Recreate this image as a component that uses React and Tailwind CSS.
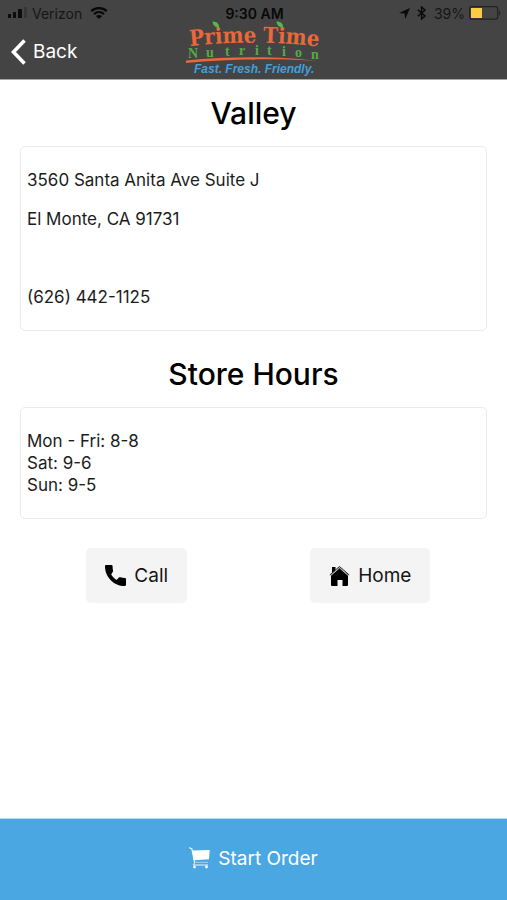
import React from "react";

function SignalIcon() {
  return (
    <svg className="h-3 w-6" viewBox="0 0 24 12" aria-hidden="true">
      <rect x="0" y="7" width="3" height="4" rx="0.5" fill="#0c0c0c" />
      <rect x="5" y="5" width="3" height="6" rx="0.5" fill="#0c0c0c" />
      <rect x="10" y="2" width="4" height="9" rx="0.5" fill="#0c0c0c" />
      <rect x="16" y="0" width="3" height="11" rx="0.5" fill="#363636" />
    </svg>
  );
}

function WifiIcon() {
  return (
    <svg className="h-3 w-[18px]" viewBox="0 0 18 12" aria-hidden="true">
      <path d="M1.2 4.2C5.6 0 12.4 0 16.8 4.2" fill="none" stroke="#080808" strokeWidth="2.3" />
      <path d="M4 7.1c2.9-2.6 7.1-2.6 10 0" fill="none" stroke="#080808" strokeWidth="2.1" />
      <path d="M9 12 5.9 9c1.8-1.5 4.4-1.5 6.2 0z" fill="#080808" />
    </svg>
  );
}

function StatusBar() {
  return (
    <div className="grid h-[26px] grid-cols-[1fr_auto_1fr] items-center pr-[6px] pl-2 text-[14px] text-[#161616]">
      <div className="flex items-center">
        <SignalIcon />
        <span className="mr-2">Verizon</span>
        <WifiIcon />
      </div>
      <span className="font-semibold text-[#080808]">9:30 AM</span>
      <div className="flex items-center justify-end">
        <svg className="mr-[7px] h-[11px] w-[11px]" viewBox="0 0 11 11" aria-hidden="true">
          <path d="M11 0 6.3 11 5.5 5.6 0 5z" fill="#0a0a0a" />
        </svg>
        <svg className="mr-2 h-[14px] w-[9px]" viewBox="0 0 9 14" aria-hidden="true">
          <path d="M.8 3.8 8 10 4.6 13V1L8 4 .8 10.2" fill="none" stroke="#0a0a0a" strokeWidth="1.5" />
        </svg>
        <span className="mr-1">39%</span>
        <svg className="h-[14px] w-8" viewBox="0 0 32 14" aria-hidden="true">
          <rect x="0.7" y="0.7" width="28" height="12.4" rx="2.2" fill="none" stroke="#222" strokeWidth="1.2" />
          <rect x="2" y="2" width="11" height="10" fill="#fbcb43" />
          <path d="M30 4.6c1.6.6 1.6 4.2 0 4.8z" fill="#222" />
        </svg>
      </div>
    </div>
  );
}

function Logo() {
  return (
    <svg className="-mt-[5px] h-[58px] w-[140px]" viewBox="0 0 140 58" role="img" aria-label="Prime Time Nutrition">
      <defs>
        <path id="brand-arc" d="M6 25Q70 18 140 26" />
      </defs>
      <text fontFamily="'DejaVu Serif Condensed', 'DejaVu Serif', serif" fontWeight="700" fontSize="22" fill="#e9683c">
        <textPath href="#brand-arc">Prime Time</textPath>
      </text>
      <path d="M28.500 0.500c4 0 7 2 6.500 6.500-3.500-.5-6-2.500-6.500-6.500z" fill="#56b947" />
      <path d="M92.500 0.500c4 0 7 2 6.500 6.500-3.500-.5-6-2.500-6.500-6.500z" fill="#56b947" />
      <text
        x="4 22 41 55 71 83 98 111 127"
        y="37 36 35 34 34 34 35 36 38"
        fontFamily="'Liberation Serif', serif"
        fontWeight="700"
        fontSize="14"
        fill="#56a947"
      >
        Nutrition
      </text>
      <path d="M2 39.500C45 35 96 35 134 40 96 37 45 38 2 42z" fill="#e9683c" />
      <text x="10" y="52" fontFamily="'Liberation Sans', sans-serif" fontWeight="700" fontStyle="italic" fontSize="12" fill="#429fdb">
        Fast. Fresh. Friendly.
      </text>
    </svg>
  );
}

function Header() {
  return (
    <header className="border-b border-[#a5a5a5] bg-[#444444]">
      <StatusBar />
      <div className="grid h-[53px] grid-cols-[1fr_auto_1fr] items-start">
        <button type="button" className="flex h-[52px] items-center gap-[7px] justify-self-start pl-[11px] text-[19px] text-white">
          <svg className="h-[26px] w-[15px]" viewBox="0 0 15 26" aria-hidden="true">
            <path d="M13.500 1.500 2.500 13l11 11.500" fill="none" stroke="currentColor" strokeWidth="3.600" />
          </svg>
          Back
        </button>
        <Logo />
      </div>
    </header>
  );
}

function InfoSection({ title, children }) {
  return (
    <section>
      <h2 className="mb-3 text-center text-[30px] leading-[42px] font-medium">{title}</h2>
      <div className="rounded-[5px] border border-[#ebebeb] px-[6px] py-[22px] text-[17px] leading-[22px] text-[#1c1c1c]">
        {children}
      </div>
    </section>
  );
}

function ActionButton({ icon, label }) {
  return (
    <button type="button" className="flex h-[55px] items-center gap-2 justify-self-center rounded-[5px] bg-[#f4f4f4] px-[19px] text-[19px] text-[#151515]">
      {icon}
      <span className="pt-[2px]">{label}</span>
    </button>
  );
}

const phoneIcon = (
  <svg className="h-[21px] w-[21px]" viewBox="3 3 18 18" fill="#000" aria-hidden="true">
    <path d="M8.300 11.200c1.100 1.900 2.700 3.500 4.600 4.600l2-2c.4-.4.9-.5 1.400-.3 1.100.4 2.400.6 3.700.6.600 0 1 .4 1 1V20c0 .6-.4 1-1 1C10.600 21 3 13.400 3 4c0-.6.400-1 1-1h4.500c.6 0 1 .4 1 1 0 1.300.1 2.500.4 3.700.1.500 0 1-.3 1.300z" />
  </svg>
);

const homeIcon = (
  <svg className="h-[22px] w-[21px]" viewBox="0 0 21 22" fill="#000" aria-hidden="true">
    <path d="M3 2h3.500v3.500L3 8.500z" />
    <path d="M10.500 2.500 19 9.800v10.200a1 1 0 0 1-1 1h-4.500v-6h-5v6H3a1 1 0 0 1-1-1V9.800z" />
    <path d="M.8 9.900 10.500 1.500l9.700 8.400" fill="none" stroke="#222" strokeWidth="1" />
    <path d="M1.300 10.900 10.500 3l9.200 7.900" fill="none" stroke="#c4c4c4" strokeWidth="1" />
  </svg>
);

function CartIcon() {
  return (
    <svg className="mb-1 h-[22px] w-[21px]" viewBox="0 0 21 22" fill="none" stroke="currentColor" aria-hidden="true">
      <path d="M0 .8 2.800 1.600 5.500 15.500" strokeWidth="1.100" />
      <path d="M3.200 3.500 20.700 3 20 12.200 5 13.200z" fill="currentColor" stroke="none" />
      <path d="M5.500 15.500 4.500 18H19" strokeWidth="0.900" />
      <path d="M5.500 15.300H19" strokeWidth="0.500" />
      <circle cx="5.500" cy="20" r="1.400" fill="currentColor" stroke="none" />
      <circle cx="17.500" cy="20" r="1.400" fill="currentColor" stroke="none" />
    </svg>
  );
}

export default function App() {
  return (
    <div className="flex min-h-screen flex-col bg-white font-[Inter,sans-serif] text-black">
      <Header />
      <main className="flex-1 px-5 pt-3">
        <InfoSection title="Valley">
          <address className="flex flex-col gap-[17px] not-italic">
            <p>3560 Santa Anita Ave Suite J</p>
            <p>El Monte, CA 91731</p>
            <p className="mt-[39px]">(626) 442-1125</p>
          </address>
        </InfoSection>
        <div className="mt-[22px]">
          <InfoSection title="Store Hours">
            <p>Mon - Fri: 8-8</p>
            <p>Sat: 9-6</p>
            <p>Sun: 9-5</p>
          </InfoSection>
        </div>
        <div className="mt-[29px] grid grid-cols-2">
          <ActionButton icon={phoneIcon} label="Call" />
          <ActionButton icon={homeIcon} label="Home" />
        </div>
      </main>
      <footer>
        <button type="button" className="flex h-[82px] w-full items-center justify-center gap-2 border-t border-[#b5daf2] bg-[#4ba7e1] text-[19px] text-white">
          <CartIcon />
          Start Order
        </button>
      </footer>
    </div>
  );
}
